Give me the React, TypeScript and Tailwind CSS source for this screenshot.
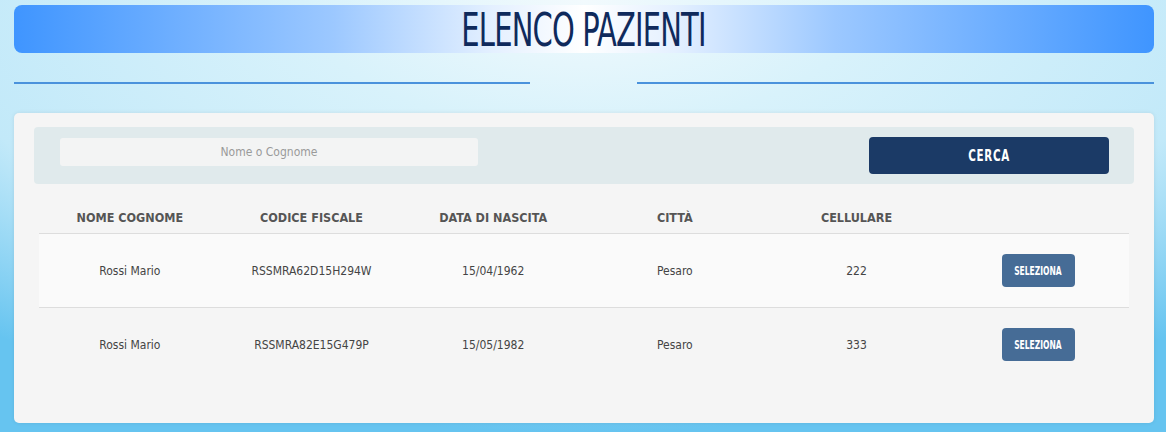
import React from "react";

const PATIENTS = [
  { name: "Rossi Mario", cf: "RSSMRA62D15H294W", birth: "15/04/1962", city: "Pesaro", phone: "222" },
  { name: "Rossi Mario", cf: "RSSMRA82E15G479P", birth: "15/05/1982", city: "Pesaro", phone: "333" },
];

const COLUMNS = ["NOME COGNOME", "CODICE FISCALE", "DATA DI NASCITA", "CITTÀ", "CELLULARE", ""];

export default function App() {
  return (
    <div className="min-h-screen w-full overflow-hidden bg-[radial-gradient(ellipse_80%_100%_at_50%_0%,#f2fafd_0%,#d8f2fb_30%,#c2e9f9_70%,#66c4f0_100%)] pl-[14px] pr-[12px] pt-[5px] font-['DejaVu_Sans_Condensed','DejaVu_Sans',sans-serif]">
      {/* title bar */}
      <div className="flex h-[48px] items-center justify-center rounded-[8px] bg-[linear-gradient(to_right,#3f95ff_0%,#9cc8ff_28%,#e4f0ff_42%,#ffffff_50%,#e4f0ff_58%,#9cc8ff_72%,#3f95ff_100%)]">
        <h1 className="scale-x-[0.7] pt-[1px] text-[46px] leading-none tracking-tight text-[#0f2a5c]">
          ELENCO PAZIENTI
        </h1>
      </div>

      {/* divider lines */}
      <div className="mt-[29px] flex justify-between">
        <div className="h-[2px] w-[516px] bg-[#4a92dc]" />
        <div className="h-[2px] w-[517px] bg-[#4a92dc]" />
      </div>

      {/* main card */}
      <div className="mt-[29px] h-[310px] rounded-[5px] bg-[#f5f5f5] px-[20px] pt-[14px] shadow-[0_0_4px_rgba(0,0,0,0.08)]">
        <div className="flex h-[57px] items-start rounded-[4px] bg-[#e0eaec] pl-[26px] pr-[25px] pt-[10px]">
          <div className="mt-[1px] flex h-[28px] w-[418px] items-center justify-center rounded-[3px] bg-[#f3f4f4] text-[12px] text-[#9a9a9a]">
            Nome o Cognome
          </div>
          <button className="ml-auto flex h-[37px] w-[240px] items-center justify-center rounded-[4px] bg-[#1b3a66]">
            <span className="scale-x-[0.72] text-[16px] font-bold tracking-[1px] text-white">CERCA</span>
          </button>
        </div>

        <div className="mx-[5px] mt-[16px]">
          <div className="grid h-[34px] grid-cols-6 items-center border-b border-[#dddddd] pt-[3px] text-center text-[12.5px] font-bold text-[#555555]">
            {COLUMNS.map((c, i) => (
              <div key={i}>{c}</div>
            ))}
          </div>
          {PATIENTS.map((p, i) => (
            <div
              key={p.cf}
              className={
                i === 0
                  ? "grid h-[74px] grid-cols-6 items-center border-b border-[#dddddd] bg-[#fafafa] text-center text-[12px] text-[#444444]"
                  : "grid h-[73px] grid-cols-6 items-center bg-[#f5f5f5] text-center text-[12px] text-[#444444]"
              }
            >
              <div>{p.name}</div>
              <div>{p.cf}</div>
              <div>{p.birth}</div>
              <div>{p.city}</div>
              <div>{p.phone}</div>
              <div className="flex justify-center">
                <button className="flex h-[33px] w-[73px] items-center justify-center rounded-[4px] bg-[#466c96]">
                  <span className="scale-x-[0.7] text-[12px] font-bold text-white">SELEZIONA</span>
                </button>
              </div>
            </div>
          ))}
        </div>
      </div>
    </div>
  );
}
